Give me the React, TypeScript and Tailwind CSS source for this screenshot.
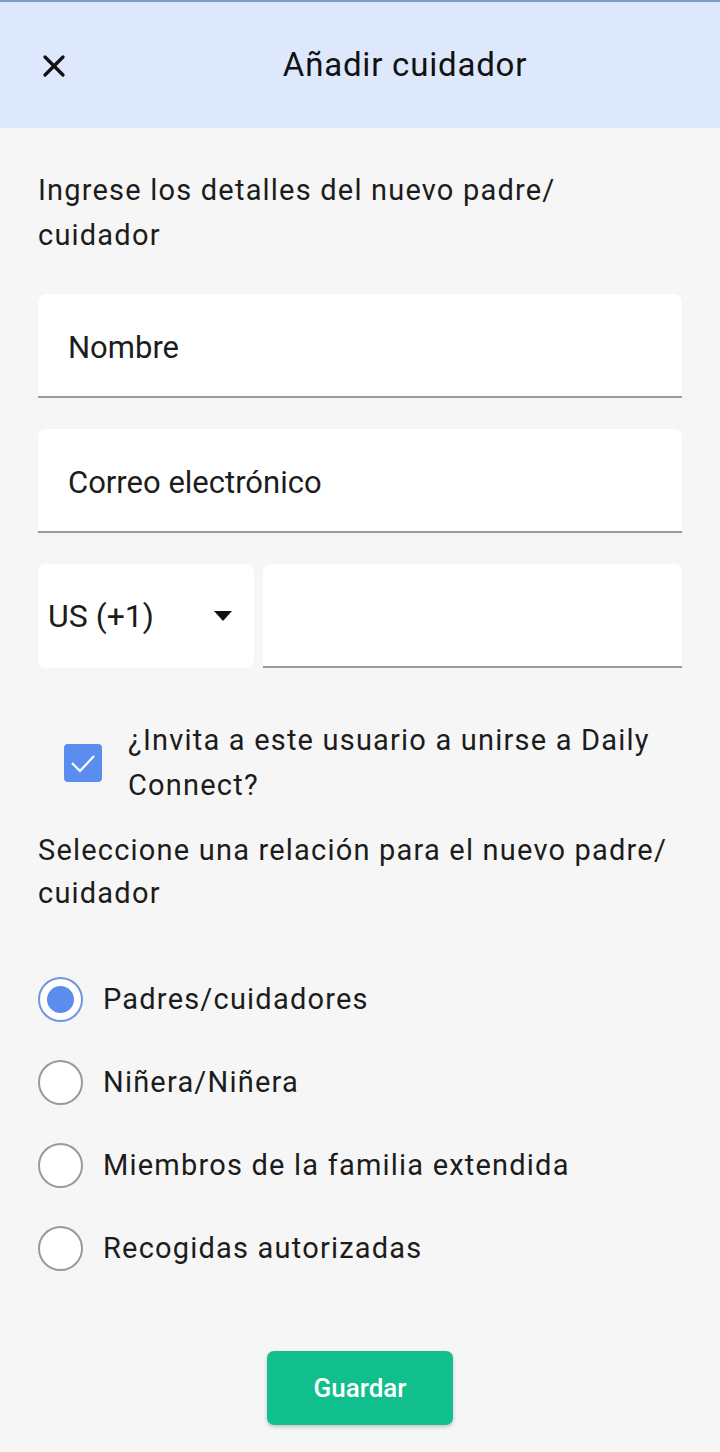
import { X } from 'lucide-react'

const relations = [
  'Padres/cuidadores',
  'Niñera/Niñera',
  'Miembros de la familia extendida',
  'Recogidas autorizadas',
]

const App = () => {
  const selected = 0

  return (
    <div className="min-h-[1452px] w-[720px] bg-[#f6f6f6] font-['Roboto',sans-serif] text-[#1c1c1c]">
      {/* header */}
      <header className="relative flex h-[128px] items-center justify-center border-t-2 border-[#7d9cc9] bg-[#dde8fc]">
        <button className="absolute left-[36px] top-[46px] text-[#111]">
          <X className="h-[36px] w-[36px]" strokeWidth={2.2} />
        </button>
        <h1 className="ml-[90px] text-[33px] tracking-[0.8px] text-[#111]">Añadir cuidador</h1>
      </header>

      <main className="px-[38px]">
        <p className="mt-[40px] text-[29px] leading-[45px] tracking-[1.2px]">
          Ingrese los detalles del nuevo padre/
          <br />
          cuidador
        </p>

        <div className="mt-[36px] flex h-[104px] items-center rounded-t-[8px] border-b-2 border-[#9a9a9a] bg-white px-[30px] pt-[6px]">
          <span className="text-[31px]">Nombre</span>
        </div>

        <div className="mt-[31px] flex h-[104px] items-center rounded-t-[8px] border-b-2 border-[#9a9a9a] bg-white px-[30px] pt-[6px]">
          <span className="text-[31px]">Correo electrónico</span>
        </div>

        <div className="mt-[31px] flex gap-[9px]">
          <div className="flex h-[104px] w-[216px] items-center justify-between rounded-[8px] bg-white pl-[10px] pr-[22px]">
            <span className="text-[32px]">US (+1)</span>
            <svg width="18" height="10" viewBox="0 0 18 10">
              <path d="M0 0 L18 0 L9 10 Z" fill="#111" />
            </svg>
          </div>
          <div className="h-[104px] flex-1 rounded-t-[8px] border-b-2 border-[#9a9a9a] bg-white" />
        </div>

        <div className="mt-[50px] flex items-center gap-[26px] pl-[26px]">
          <div className="flex h-[38px] w-[38px] shrink-0 items-center justify-center rounded-[4px] bg-[#5b8def]">
            <svg width="28" height="22" viewBox="0 0 28 22">
              <path d="M3 11 L11 19 L25 4" fill="none" stroke="white" strokeWidth="2.2" />
            </svg>
          </div>
          <p className="text-[29px] leading-[45px] tracking-[1.2px]">
            ¿Invita a este usuario a unirse a Daily
            <br />
            Connect?
          </p>
        </div>

        <p className="mt-[21px] text-[29px] leading-[43px] tracking-[1.2px]">
          Seleccione una relación para el nuevo padre/
          <br />
          cuidador
        </p>

        <div className="mt-[62px] flex flex-col gap-[38px]">
          {relations.map((r, i) => (
            <label key={r} className="flex items-center gap-[20px]">
              {i === selected ? (
                <span className="flex h-[45px] w-[45px] items-center justify-center rounded-full border-2 border-[#6e97dc] bg-white">
                  <span className="h-[27px] w-[27px] rounded-full bg-[#5b8def]" />
                </span>
              ) : (
                <span className="h-[45px] w-[45px] rounded-full border-2 border-[#9a9a9a] bg-white" />
              )}
              <span className="text-[29px] tracking-[1.2px]">{r}</span>
            </label>
          ))}
        </div>

        <div className="mt-[80px] flex justify-center">
          <button className="h-[74px] w-[186px] rounded-[7px] bg-[#10bf8c] text-[26px] font-medium text-white shadow-[0_2px_4px_rgba(0,0,0,0.2)]">
            Guardar
          </button>
        </div>
      </main>
    </div>
  )
}

export default App
